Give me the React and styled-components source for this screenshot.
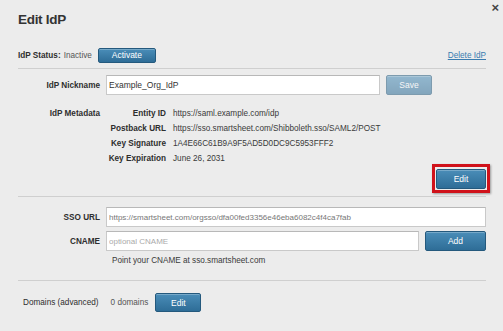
import React, { useState } from "react";
import styled, { createGlobalStyle } from "styled-components";

const GlobalStyle = createGlobalStyle`
  html, body {
    margin: 0;
    padding: 0;
    background: #ececec;
  }
  body {
    font-family: "Liberation Sans", Arial, sans-serif;
    color: #333;
  }
`;

const Dialog = styled.div`
  position: relative;
  width: 503px;
  height: 331px;
  box-sizing: border-box;
  padding: 11px 17px 0 18px;
  background: #ececec;
  overflow: hidden;
`;

const Close = styled.button`
  position: absolute;
  top: 1px;
  right: 4px;
  border: 0;
  background: none;
  padding: 0;
  font-size: 13px;
  font-weight: bold;
  color: #444;
  line-height: 14px;
  cursor: pointer;
`;

const Title = styled.h1`
  margin: 0;
  font-size: 13.5px;
  line-height: 18px;
  font-weight: bold;
  color: #333;
  letter-spacing: -0.3px;
`;

const StatusRow = styled.div`
  display: flex;
  align-items: center;
  height: 16px;
  margin-top: 18px;
  font-size: 8.2px;
`;

const Bold = styled.span`
  font-weight: bold;
  color: #2e2e2e;
`;

const Muted = styled.span`
  color: #555;
  margin-left: 3px;
`;

const Button = styled.button`
  height: ${(p) => p.$h || 15}px;
  width: ${(p) => p.$w}px;
  padding: 0;
  border: 1px solid #24597d;
  border-radius: 2px;
  background: linear-gradient(#4a8db8, #2e6d97);
  color: #fff;
  font-family: "Liberation Sans", Arial, sans-serif;
  font-size: 8.5px;
  box-shadow: inset 0 1px 0 rgba(255, 255, 255, 0.25);
  opacity: ${(p) => (p.disabled ? 0.55 : 1)};
  flex-shrink: 0;
`;

const Spacer = styled.div`
  flex: 1;
`;

const Link = styled.a`
  color: #3a7cb0;
  text-decoration: underline;
  font-size: 8.2px;
`;

const Divider = styled.hr`
  border: 0;
  border-top: 1px solid #cfcfcf;
  margin: ${(p) => p.$m || "0"};
`;

const FieldRow = styled.div`
  display: grid;
  grid-template-columns: 82px 1fr;
  column-gap: 6px;
  align-items: center;
  margin-top: ${(p) => p.$mt || 0}px;
  font-size: 8.2px;
`;

const Label = styled.div`
  text-align: right;
  font-weight: bold;
  color: #2e2e2e;
  line-height: ${(p) => p.$lh || "normal"};
`;

const Inline = styled.div`
  display: flex;
  align-items: center;
  gap: 6px;
`;

const Input = styled.input`
  box-sizing: border-box;
  height: 20px;
  width: ${(p) => (p.$w ? `${p.$w}px` : "100%")};
  border: 1px solid #c9c9c9;
  border-top-color: #b8b8b8;
  background: #fff;
  padding: 0 2px;
  font-family: "Liberation Sans", Arial, sans-serif;
  font-size: ${(p) => p.$fs || 8}px;
  color: ${(p) => p.$c || "#333"};
  outline: none;
  &::placeholder {
    color: #aaa;
  }
`;

const MetaSection = styled.div`
  display: grid;
  grid-template-columns: 82px 1fr;
  column-gap: 6px;
  margin-top: 11px;
  font-size: 8.2px;
`;

const MetaGrid = styled.div`
  display: grid;
  grid-template-columns: 60px 1fr;
  column-gap: 7px;
  line-height: 15px;
`;

const MetaKey = styled.div`
  text-align: right;
  font-weight: bold;
  color: #2e2e2e;
  white-space: nowrap;
`;

const MetaValue = styled.div`
  color: #3a3a3a;
  white-space: nowrap;
`;

const EditWrap = styled.div`
  display: flex;
  justify-content: flex-end;
  margin-top: -2px;
`;

const Highlight = styled.div`
  border: 3px solid #d0121b;
  padding: 1px;
  margin-right: -4px;
  box-shadow: 1px 1px 2px rgba(0, 0, 0, 0.35);
`;

const Hint = styled.div`
  padding-left: 94px;
  margin-top: 4px;
  font-size: 8.2px;
  color: #3a3a3a;
  line-height: 12px;
`;

const DomainRow = styled.div`
  display: flex;
  align-items: center;
  margin-top: 12px;
  padding-left: 5px;
  font-size: 8.2px;
  color: #2e2e2e;
`;

const DomainCount = styled.span`
  margin-left: 12px;
  margin-right: 7px;
  color: #555;
`;

export default function App() {
  const [nickname, setNickname] = useState("Example_Org_IdP");
  const [cname, setCname] = useState("");

  const meta = [
    ["Entity ID", "https://saml.example.com/idp"],
    ["Postback URL", "https://sso.smartsheet.com/Shibboleth.sso/SAML2/POST"],
    ["Key Signature", "1A4E66C61B9A9F5AD5D0DC9C5953FFF2"],
    ["Key Expiration", "June 26, 2031"],
  ];

  return (
    <Dialog>
      <GlobalStyle />
      <Close aria-label="Close">×</Close>
      <Title>Edit IdP</Title>

      <StatusRow>
        <Bold>IdP Status:</Bold>
        <Muted>Inactive</Muted>
        <Button $w={58} style={{ marginLeft: 6 }}>
          Activate
        </Button>
        <Spacer />
        <Link href="#">Delete IdP</Link>
      </StatusRow>

      <Divider $m="5px 0 0" />

      <FieldRow $mt={6}>
        <Label>IdP Nickname</Label>
        <Inline>
          <Input
            $w={274}
            $fs={8.5}
            value={nickname}
            onChange={(e) => setNickname(e.target.value)}
          />
          <Button $w={46} $h={20} disabled>
            Save
          </Button>
        </Inline>
      </FieldRow>

      <MetaSection>
        <Label $lh="15px">IdP Metadata</Label>
        <MetaGrid>
          {meta.map(([k, v]) => (
            <React.Fragment key={k}>
              <MetaKey>{k}</MetaKey>
              <MetaValue>{v}</MetaValue>
            </React.Fragment>
          ))}
        </MetaGrid>
      </MetaSection>

      <EditWrap>
        <Highlight>
          <Button $w={50} $h={20}>
            Edit
          </Button>
        </Highlight>
      </EditWrap>

      <Divider $m="3px 0 0" />

      <FieldRow $mt={10}>
        <Label>SSO URL</Label>
        <Input
          $c="#777"
          readOnly
          value="https://smartsheet.com/orgsso/dfa00fed3356e46eba6082c4f4ca7fab"
        />
      </FieldRow>

      <FieldRow $mt={4}>
        <Label>CNAME</Label>
        <Inline>
          <Input
            $w={313}
            placeholder="optional CNAME"
            value={cname}
            onChange={(e) => setCname(e.target.value)}
          />
          <Button $w={61} $h={20}>
            Add
          </Button>
        </Inline>
      </FieldRow>

      <Hint>Point your CNAME at sso.smartsheet.com</Hint>

      <Divider $m="13px 0 0" />

      <DomainRow>
        <span>Domains (advanced)</span>
        <DomainCount>0 domains</DomainCount>
        <Button $w={46} $h={19}>
          Edit
        </Button>
      </DomainRow>
    </Dialog>
  );
}
